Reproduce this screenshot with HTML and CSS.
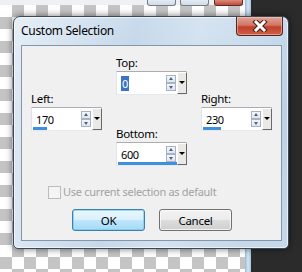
FILE: index.html
```html
<!DOCTYPE html>
<html lang="en">
  <head>
    <meta charset="UTF-8" />
    <title>Custom Selection</title>
    <link rel="stylesheet" href="styles.css">
  </head>
  <body>
    <div class="desktop">
      <div class="canvas">
        <div class="strip"></div>
        <div class="checker"></div>
      </div>
      <div class="edge"></div>
      <div class="dark"></div>

      <div class="parent-caption">
        <span class="cap-btn"></span>
        <span class="cap-btn"></span>
        <span class="cap-btn cap-close"></span>
      </div>

      <div class="dialog">
        <div class="titlebar">
          <span class="title">Custom Selection</span>
          <button class="close">
            <svg width="16" height="12" viewBox="0 0 16 12">
              <path d="M4 2 L12 10 M12 2 L4 10" stroke="#4a1c14" stroke-width="5" stroke-linecap="square" fill="none" />
              <path d="M4 2 L12 10 M12 2 L4 10" stroke="#ffffff" stroke-width="3" stroke-linecap="square" fill="none" />
            </svg>
          </button>
        </div>

        <div class="client">
          <div class="fields">
            <div class="col side">
              <label class="lbl">Left:</label>
              <div class="spin">
                <span class="val">170</span>
                <span class="arrows"><i class="up"></i><i class="down"></i></span>
                <span class="drop"></span>
                <span class="bar" style="width: 14px"></span>
              </div>
            </div>
            <div class="col mid">
              <div class="group">
                <label class="lbl">Top:</label>
                <div class="spin">
                  <span class="val"><span class="sel">0</span></span>
                  <span class="arrows"><i class="up"></i><i class="down"></i></span>
                  <span class="drop"></span>
                </div>
              </div>
              <div class="group">
                <label class="lbl">Bottom:</label>
                <div class="spin">
                  <span class="val">600</span>
                  <span class="arrows"><i class="up"></i><i class="down"></i></span>
                  <span class="drop"></span>
                  <span class="bar" style="width: 59px"></span>
                </div>
              </div>
            </div>
            <div class="col side">
              <label class="lbl">Right:</label>
              <div class="spin">
                <span class="val">230</span>
                <span class="arrows"><i class="up"></i><i class="down"></i></span>
                <span class="drop"></span>
                <span class="bar" style="width: 18px"></span>
              </div>
            </div>
          </div>

          <div class="check">
            <span class="box"></span>
            <span class="check-text">Use current selection as default</span>
          </div>

          <div class="buttons">
            <button class="btn btn-default">OK</button>
            <button class="btn">Cancel</button>
          </div>
        </div>
      </div>
    </div>
  </body>
</html>
```

FILE: styles.css
```css
* {
  margin: 0;
  padding: 0;
  box-sizing: border-box;
}

html,
body {
  width: 302px;
  height: 272px;
  overflow: hidden;
}

body {
  font-family: "Noto Sans", "Liberation Sans", sans-serif;
  font-size: 11px;
  letter-spacing: -0.3px;
  color: #000;
}

.desktop {
  position: relative;
  width: 302px;
  height: 272px;
  display: grid;
  grid-template-columns: 245px 6px 1fr;
}

.canvas {
  display: flex;
  flex-direction: column;
}

.strip {
  height: 5px;
  background: #eef0f3;
}

.checker {
  flex: 1;
  background-color: #ffffff;
  background-image:
    linear-gradient(45deg, #c4c4c4 25%, transparent 25%, transparent 75%, #c4c4c4 75%),
    linear-gradient(45deg, #c4c4c4 25%, transparent 25%, transparent 75%, #c4c4c4 75%);
  background-size: 24px 24px;
  background-position: 0 0, 12px 12px;
}

.edge {
  background: linear-gradient(to right, #9ab8d6, #d4e6f6 50%, #a9c3dc);
}

.dark {
  background: #2b2b2b;
}

/* caption buttons of the window behind */
.parent-caption {
  position: absolute;
  top: 0;
  left: 147px;
  display: flex;
  gap: 4px;
}

.cap-btn {
  width: 29px;
  height: 6px;
  border: 1px solid #6f7d8c;
  border-top: none;
  border-radius: 0 0 3px 3px;
  background: linear-gradient(#e4ebf2, #d2dce6);
}

.cap-close {
  margin-left: 1px;
  background: linear-gradient(#d98b7d, #c4483a);
  border-color: #5e2b25;
}

/* dialog window */
.dialog {
  position: absolute;
  left: 13px;
  top: 16px;
  width: 276px;
  height: 233px;
  display: flex;
  flex-direction: column;
  padding: 0 6px 7px 7px;
  border: 1px solid #3c4856;
  border-radius: 7px 7px 5px 5px;
  background:
    linear-gradient(100deg, rgba(255, 255, 255, 0.55) 0%, rgba(255, 255, 255, 0) 40%, rgba(255, 255, 255, 0.25) 60%, rgba(255, 255, 255, 0) 85%),
    linear-gradient(#c9dbec, #bcd1e6 40%, #c6d8ea);
  box-shadow: 0 0 7px rgba(0, 0, 0, 0.55), inset 0 0 0 1px rgba(255, 255, 255, 0.6);
}

.titlebar {
  height: 28px;
  display: flex;
  align-items: flex-start;
}

.title {
  padding-top: 6px;
  font-size: 12px;
  line-height: 15px;
  letter-spacing: -0.3px;
  color: #000;
}

.close {
  margin-left: auto;
  margin-right: -1px;
  width: 47px;
  height: 19px;
  display: flex;
  align-items: center;
  justify-content: center;
  border: 1px solid #4e2620;
  border-top: none;
  border-radius: 0 0 4px 4px;
  background: linear-gradient(#e2a495, #d27766 45%, #c0402d 55%, #cf6048);
  box-shadow: inset 0 0 0 1px rgba(255, 210, 200, 0.5);
}

.client {
  flex: 1;
  background: #f0f0f0;
  border: 1px solid #8496aa;
}

.fields {
  display: grid;
  grid-template-columns: 71px 71px 71px;
  column-gap: 14px;
  padding: 9px 0 0 9px;
}

.side {
  padding-top: 36px;
}

.mid {
  display: flex;
  flex-direction: column;
  gap: 31px;
}

.lbl {
  display: block;
  height: 16px;
  line-height: 16px;
  font-size: 11.5px;
}

.spin {
  position: relative;
  width: 71px;
  height: 24px;
  display: flex;
  align-items: center;
  background: #fff;
  border: 1px solid;
  border-color: #abadb3 #dbdfe6 #e3e9ef #e2e3ea;
}

.val {
  flex: 1;
  padding-left: 4px;
  padding-top: 2px;
  line-height: 16px;
  font-size: 11px;
  letter-spacing: -0.4px;
}

.sel {
  background: #3a75c4;
  color: #fff;
  padding: 0 1px;
}

.arrows {
  display: flex;
  flex-direction: column;
  width: 10px;
  margin-right: 1px;
}

.arrows i {
  position: relative;
  display: block;
  height: 8px;
  border: 1px solid #a9b3c3;
  background: linear-gradient(#f4f7fb, #dde5ef);
}

.arrows i::after {
  content: "";
  position: absolute;
  left: 2px;
  border-left: 2px solid transparent;
  border-right: 2px solid transparent;
}

.up::after {
  top: 1px;
  border-bottom: 3px solid #4d6185;
}

.down::after {
  top: 2px;
  border-top: 3px solid #4d6185;
}

.drop {
  position: relative;
  width: 10px;
  height: 22px;
  margin-right: -1px;
  background: #ebe9e6;
  border: 1px solid;
  border-color: #ffffff #696969 #696969 #ffffff;
}

.drop::after {
  content: "";
  position: absolute;
  left: 1px;
  top: 8px;
  border-left: 3px solid transparent;
  border-right: 3px solid transparent;
  border-top: 3px solid #000;
}

.bar {
  position: absolute;
  left: 1px;
  bottom: 0;
  height: 3px;
  background: #3f8fde;
}

.check {
  display: flex;
  align-items: center;
  gap: 2px;
  margin: 19px 0 0 26px;
  color: #a2a2a2;
}

.box {
  width: 13px;
  height: 13px;
  border: 1px solid #bcbcbc;
  background: #f4f4f4;
}

.check-text {
  line-height: 14px;
  font-size: 11px;
}

.buttons {
  display: flex;
  gap: 14px;
  margin: 10px 0 0 50px;
}

.btn {
  width: 73px;
  height: 22px;
  font-family: "Noto Sans", "Liberation Sans", sans-serif;
  font-size: 11.5px;
  letter-spacing: -0.3px;
  color: #000;
  border: 1px solid #707070;
  border-radius: 3px;
  background: linear-gradient(#f2f2f2 0%, #ebebeb 50%, #dddddd 51%, #cfcfcf 100%);
  box-shadow: inset 0 0 0 1px rgba(255, 255, 255, 0.7);
}

.btn-default {
  border-color: #3c7fb1;
  background: linear-gradient(#eaf6fd 0%, #d9f0fc 50%, #bee6fd 51%, #a7d9f5 100%);
  box-shadow: inset 0 0 0 1px rgba(104, 200, 235, 0.6);
}
```
